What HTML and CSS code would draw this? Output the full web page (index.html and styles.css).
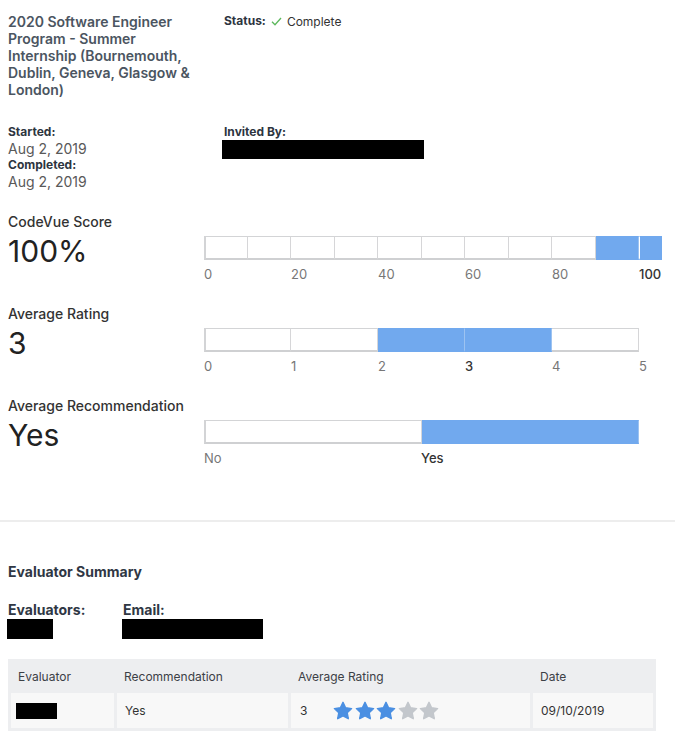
FILE: index.html
```html
<!DOCTYPE html>
<html lang="en">
<head>
<meta charset="utf-8">
<title>Candidate Report</title>
<link rel="stylesheet" href="styles.css">
</head>
<body>
<main class="page page-top">
<section class="top">
  <div class="title-col">
    <h1 class="title">2020 Software Engineer Program - Summer Internship (Bournemouth, Dublin, Geneva, Glasgow &amp; London)</h1>
  </div>
  <div class="status-col">
    <span class="lbl">Status:</span>
    <svg class="check" width="11" height="9" viewBox="0 0 11 9"><polyline points="1,4.8 4,7.8 10,1" fill="none" stroke="#5cb85c" stroke-width="1.3"/></svg>
    <span class="status-val">Complete</span>
  </div>
</section>

<section class="dates">
  <div class="dates-left">
    <div class="lbl">Started:</div>
    <div class="date">Aug 2, 2019</div>
    <div class="lbl">Completed:</div>
    <div class="date">Aug 2, 2019</div>
  </div>
  <div class="dates-right">
    <div class="lbl">Invited By:</div>
    <div class="redact redact-invite"></div>
  </div>
</section>

<section class="metrics">
  <div class="metric">
    <div class="metric-left">
      <div class="m-label">CodeVue Score</div>
      <div class="m-value">100%</div>
    </div>
    <div class="metric-right">
      <div class="bar">
        <div class="seg s10 first"></div><div class="seg s10"></div><div class="seg s10"></div><div class="seg s10"></div><div class="seg s10"></div>
        <div class="seg s10"></div><div class="seg s10"></div><div class="seg s10"></div><div class="seg s10"></div><div class="seg s10 on"></div>
        <div class="seg extra on"></div>
      </div>
      <div class="ticks">
        <span class="tick t87">0</span><span class="tick t87">20</span><span class="tick t87">40</span><span class="tick t87">60</span><span class="tick t87">80</span><span class="tick cur">100</span>
      </div>
    </div>
  </div>

  <div class="metric">
    <div class="metric-left">
      <div class="m-label">Average Rating</div>
      <div class="m-value">3</div>
    </div>
    <div class="metric-right">
      <div class="bar">
        <div class="seg s5 first"></div><div class="seg s5"></div><div class="seg s5 on"></div><div class="seg s5 on"></div><div class="seg s5"></div>
      </div>
      <div class="ticks">
        <span class="tick t87">0</span><span class="tick t87">1</span><span class="tick t87">2</span><span class="tick t87 cur">3</span><span class="tick t87">4</span><span class="tick">5</span>
      </div>
    </div>
  </div>

  <div class="metric">
    <div class="metric-left">
      <div class="m-label">Average Recommendation</div>
      <div class="m-value">Yes</div>
    </div>
    <div class="metric-right">
      <div class="bar">
        <div class="seg s2 first"></div><div class="seg s2 on"></div>
      </div>
      <div class="ticks">
        <span class="tick t217">No</span><span class="tick cur">Yes</span>
      </div>
    </div>
  </div>
</section>
</main>

<div class="divider"></div>

<section class="page summary">
  <h2 class="summary-title">Evaluator Summary</h2>
  <div class="people">
    <div class="person-col">
      <div class="p-label">Evaluators:</div>
      <div class="redact redact-name"></div>
    </div>
    <div class="person-col email-col">
      <div class="p-label">Email:</div>
      <div class="redact redact-email"></div>
    </div>
  </div>

  <table class="eval-table">
    <thead>
      <tr>
        <th class="c1">Evaluator</th>
        <th class="c2">Recommendation</th>
        <th class="c3">Average Rating</th>
        <th class="c4">Date</th>
      </tr>
    </thead>
    <tbody>
      <tr>
        <td><div class="redact redact-cell"></div></td>
        <td>Yes</td>
        <td>
          <div class="rating">
            <span class="rating-num">3</span>
            <span class="stars">
              <svg class="star on" viewBox="0 0 20 19"><path d="M10 1.3l2.6 5.5 6 .8-4.4 4.1 1.1 6-5.3-2.9-5.3 2.9 1.1-6L1.4 7.6l6-.8z"/></svg>
              <svg class="star on" viewBox="0 0 20 19"><path d="M10 1.3l2.6 5.5 6 .8-4.4 4.1 1.1 6-5.3-2.9-5.3 2.9 1.1-6L1.4 7.6l6-.8z"/></svg>
              <svg class="star on" viewBox="0 0 20 19"><path d="M10 1.3l2.6 5.5 6 .8-4.4 4.1 1.1 6-5.3-2.9-5.3 2.9 1.1-6L1.4 7.6l6-.8z"/></svg>
              <svg class="star" viewBox="0 0 20 19"><path d="M10 1.3l2.6 5.5 6 .8-4.4 4.1 1.1 6-5.3-2.9-5.3 2.9 1.1-6L1.4 7.6l6-.8z"/></svg>
              <svg class="star" viewBox="0 0 20 19"><path d="M10 1.3l2.6 5.5 6 .8-4.4 4.1 1.1 6-5.3-2.9-5.3 2.9 1.1-6L1.4 7.6l6-.8z"/></svg>
            </span>
          </div>
        </td>
        <td>09/10/2019</td>
      </tr>
    </tbody>
  </table>
</section>
</body>
</html>
```

FILE: styles.css
```css
* { box-sizing: border-box; }

html, body { background: #ffffff; }

body {
  margin: 0;
  font-family: Inter, "Noto Sans", "Liberation Sans", sans-serif;
  color: #333333;
}

.page { padding: 0 8px; }

.page-top { display: block; padding-top: 8px; }

.top {
  display: flex;
  padding-top: 5px;
}

.title-col {
  width: 216px;
  flex: none;
}

.title {
  margin: 0;
  width: 194px;
  font-size: 14px;
  line-height: 17px;
  font-weight: 600;
  color: #4b5561;
}

.status-col {
  display: flex;
  align-items: center;
  height: 16px;
  font-size: 12px;
  color: #2f3540;
}

.lbl {
  font-size: 12px;
  line-height: 16px;
  font-weight: 700;
  color: #2d3540;
}

.check { margin: 0 5px 0 5px; }

.status-val { font-size: 12px; color: #333; }

.dates {
  display: flex;
  margin-top: 26px;
}

.dates-left { width: 216px; flex: none; }

.date {
  font-size: 14px;
  line-height: 17px;
  color: #595959;
}

.redact { background: #000; }

.redact-invite {
  width: 202px;
  height: 19px;
  margin-left: -2px;
}

.metrics { margin-top: 23px; }

.metric {
  display: flex;
}

.metric-left {
  width: 196px;
  flex: none;
}

.m-label {
  font-size: 14px;
  line-height: 17px;
  font-weight: 500;
  color: #333;
}

.m-value {
  font-size: 30px;
  line-height: 40px;
  margin-top: 1px;
  color: #222;
}

.metric-right {
  padding-top: 23px;
  padding-bottom: 23px;
}

.bar {
  display: flex;
  height: 24px;
}

.seg {
  height: 24px;
  border-top: 1px solid #d3d4d6;
  border-bottom: 2px solid #cfd0d2;
  border-right: 1px solid #d6d6d8;
  background: #fff;
}

.seg.first { border-left: 2px solid #d3d4d6; }

.s10 { width: 43.5px; }
.s5 { width: 87px; }
.s2 { width: 217.5px; }
.extra { width: 23px; }

.seg.on {
  background: #71a9ee;
  border-top-color: #71a9ee;
  border-bottom-color: #71a9ee;
  border-right-color: #9dc3f1;
}

.seg.extra.on {
  border-right-color: #71a9ee;
  border-left: 1px solid #ffffff;
}

.ticks {
  display: flex;
  margin-top: 6px;
  font-size: 13px;
  line-height: 16px;
  color: #777;
}

.tick { flex: none; }
.t87 { width: 87px; }
.t217 { width: 217px; }
.tick.cur { color: #333; font-weight: 500; }

.divider {
  margin-top: 31px;
  width: 100%;
  height: 2px;
  background: #ededed;
}

.summary { padding-top: 41px; padding-bottom: 8px; }

.summary-title {
  margin: 0;
  font-size: 14px;
  line-height: 17px;
  font-weight: 700;
  color: #2f3744;
}

.people {
  display: flex;
  margin-top: 21px;
}

.person-col { width: 115px; flex: none; }

.p-label {
  font-size: 14px;
  line-height: 17px;
  font-weight: 700;
  color: #2f3744;
}

.redact-name { width: 46px; height: 20px; margin-left: -1px; margin-top: 1px; }
.redact-email { width: 141px; height: 20px; margin-left: -1px; margin-top: 1px; }

.eval-table {
  margin-top: 20px;
  width: 646px;
  border-collapse: separate;
  border-spacing: 3px;
  background: #edeef0;
  font-size: 12px;
  color: #333;
  table-layout: fixed;
}

.eval-table th {
  height: 28px;
  padding: 0 7px;
  text-align: left;
  font-weight: 400;
  color: #3c4046;
}

.c1 { width: 103px; }
.c2 { width: 171px; }
.c3 { width: 239px; }
.c4 { width: 120px; }

.eval-table td {
  height: 35px;
  padding: 0 8px;
  background: #f8f8f8;
  vertical-align: middle;
}

.redact-cell { width: 41px; height: 16px; margin-left: -3px; }

.rating { display: flex; align-items: center; }

.rating-num { width: 34px; flex: none; padding-left: 1px; }

.stars { display: flex; gap: 1.5px; }

.star {
  width: 20px;
  height: 19px;
  fill: #c3c7cc;
  stroke: #c3c7cc;
  stroke-width: 1.4;
  stroke-linejoin: round;
}

.star.on { fill: #4a8fe2; stroke: #4a8fe2; }
```
